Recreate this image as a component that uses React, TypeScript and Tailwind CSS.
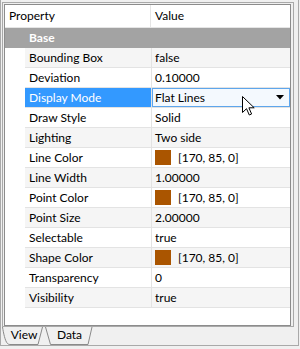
import React from 'react'

type Row = { name: string; value: string; color?: string; selected?: boolean }

const rows: Row[] = [
  { name: 'Bounding Box', value: 'false' },
  { name: 'Deviation', value: '0.10000' },
  { name: 'Display Mode', value: 'Flat Lines', selected: true },
  { name: 'Draw Style', value: 'Solid' },
  { name: 'Lighting', value: 'Two side' },
  { name: 'Line Color', value: '[170, 85, 0]', color: '#aa5500' },
  { name: 'Line Width', value: '1.00000' },
  { name: 'Point Color', value: '[170, 85, 0]', color: '#aa5500' },
  { name: 'Point Size', value: '2.00000' },
  { name: 'Selectable', value: 'true' },
  { name: 'Shape Color', value: '[170, 85, 0]', color: '#aa5500' },
  { name: 'Transparency', value: '0' },
  { name: 'Visibility', value: 'true' },
]

function Cursor() {
  return (
    <svg width="14" height="21" viewBox="0 0 14 21" className="absolute left-[89px] top-[7px]">
      <path
        d="M0.5 0.5 L0.5 16.5 L4.5 12.7 L7.3 19 L9.6 18 L6.9 11.8 L12.2 11.8 Z"
        fill="#fff"
        stroke="#000"
        strokeWidth="1"
        strokeLinejoin="miter"
      />
    </svg>
  )
}

function PropRow({ row, index }: { row: Row; index: number }) {
  const alt = index % 2 === 0
  return (
    <div className="flex h-[20px]">
      <div className="w-[20px] bg-white" />
      <div
        className={`flex flex-1 border-b border-[#e3e3e3] ${alt ? 'bg-[#f5f5f5]' : 'bg-white'}`}
      >
        <div
          className={`flex w-[127px] items-center border-r border-[#e3e3e3] pl-[4px] ${
            row.selected ? 'bg-[#3399ff] text-white' : 'text-black'
          }`}
        >
          {row.name}
        </div>
        {row.selected ? (
          <div className="relative flex flex-1 items-center border border-[#5ea6ec] bg-[#f4f9fe] pl-[2px]">
            <span className="flex-1">{row.value}</span>
            <svg width="8" height="5" viewBox="0 0 8 5" className="mr-[5px]">
              <path d="M0 0 L8 0 L4 4.5 Z" fill="#000" />
            </svg>
            <Cursor />
          </div>
        ) : (
          <div className="flex flex-1 items-center pl-[3px]">
            {row.color && <span className="mr-[7px] h-[15px] w-[16px]" style={{ background: row.color }} />}
            {row.value}
          </div>
        )}
      </div>
    </div>
  )
}

function Tab({ label, selected, w }: { label: string; selected?: boolean; w: number }) {
  return (
    <div className="relative flex h-[19px] items-center justify-center pb-[3px]" style={{ width: w }}>
      <svg
        width={w}
        height="19"
        viewBox={`0 0 ${w} 19`}
        className="absolute left-0 top-0"
        fill="none"
        stroke="#8a8a8a"
      >
        {selected ? (
          <path d={`M0.5 0 C1.5 6 3 14 5.5 16.5 C6.5 17.5 7.5 17.5 9 17.5 L${w - 8} 17.5 L${w - 3.5} 0`} />
        ) : (
          <path d={`M0.5 0 L5.5 17.5 L${w - 6} 17.5 L${w - 2} 0`} />
        )}
      </svg>
      <span className="relative">{label}</span>
    </div>
  )
}

export default function App() {
  return (
    <div className="h-[349px] w-[300px] bg-[#f0f0f0] font-['Segoe_UI',Lato,sans-serif] text-[12px] leading-none text-black">
      <div className="flex h-[346px] w-[299px] flex-col border-x border-b border-[#a9a9a9]">
        {/* Tab pane */}
        <div className="ml-[1px] mt-[2px] h-[326px] w-[292px] border border-[#a9a9a9] pl-[1px] pt-[1px]">
          {/* Tree view */}
          <div className="flex h-[322px] w-[287px] flex-col border border-[#8c8c8c] bg-white">
            <div className="flex h-[23px] border-b border-[#e5e5e5]">
              <div className="flex w-[146px] items-center border-r border-[#e5e5e5] pl-[4px]">Property</div>
              <div className="flex flex-1 items-center pl-[4px]">Value</div>
            </div>
            <div className="flex h-[20px] items-center bg-[#a3a3a3] pl-[24px] font-bold text-white">Base</div>
            {rows.map((r, i) => (
              <PropRow key={r.name} row={r} index={i} />
            ))}
          </div>
        </div>
        {/* Tabs */}
        <div className="flex">
          <div className="ml-[1px]">
            <Tab label="View" selected w={44} />
          </div>
          <div className="-ml-[1px]">
            <Tab label="Data" w={49} />
          </div>
        </div>
      </div>
    </div>
  )
}
